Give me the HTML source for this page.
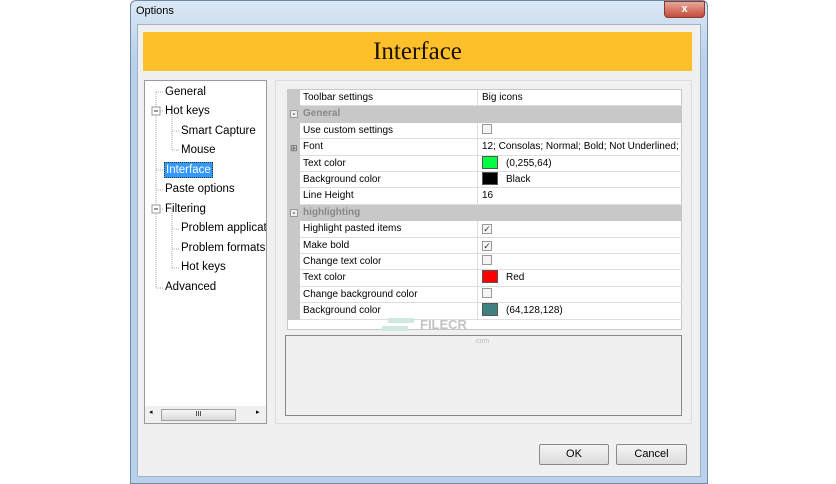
<!DOCTYPE html>
<html><head><style>
*{margin:0;padding:0;box-sizing:border-box}
body{width:836px;height:484px;background:#fff;position:relative;overflow:hidden;font-family:"Liberation Sans",sans-serif;font-size:11px;color:#000}
.a{position:absolute}
.win{left:130px;top:0;width:578px;height:484px;background:linear-gradient(#dbe8f5,#b9d1ea 60px,#b9d1ea);border:1px solid #6f8aa8;border-radius:6px 6px 0 0}
.client{left:137px;top:24px;width:564px;height:453px;background:#f0f0f0;border:1px solid #9fb3c8}
.banner{left:143px;top:32px;width:549px;height:39px;background:#fec02a;font-family:"Liberation Serif",serif;font-size:25px;text-align:center;line-height:39px;color:#1a1000}
.tree{left:144px;top:80px;width:123px;height:344px;background:#fff;border:1px solid #9a9a9a;overflow:hidden}
.ti{position:absolute;font-size:11.5px;white-space:nowrap;line-height:14px}
.grid{left:287px;top:89px;width:395px;height:241px;background:#fff;border:1px solid #c8c8c8}
.row{position:absolute;left:12px;width:382px;height:16.4px;border-bottom:1px solid #ddd;font-size:10px;line-height:16px}
.row .n{position:absolute;left:3px}
.row .v{position:absolute;left:177px;top:0;height:16px;border-left:1px solid #ddd;padding-left:4px;width:205px;white-space:nowrap;overflow:hidden}
.cat{position:absolute;left:0;width:394px;height:16.4px;background:#c8c8c8;color:#888;font-weight:bold;font-size:10px;line-height:16px;padding-left:15px}
.cb{display:inline-block;width:10px;height:10px;border:1px solid #999;background:#f4f4f4;vertical-align:-1px;font-size:9px;line-height:8px;text-align:center;color:#335}
.sw{display:inline-block;width:16px;height:13px;border:1px solid #555;vertical-align:-3px;margin-right:8px}
.btn{top:444px;height:21px;border:1px solid #8a8a8a;border-radius:2px;background:linear-gradient(#f4f4f4,#dcdcdc);text-align:center;line-height:19px;font-size:11px}
</style></head><body>
<div class="a win"></div>
<div class="a" style="left:136px;top:5px;font-size:11px">Options</div>
<div class="a" style="left:664px;top:1px;width:41px;height:17px;background:linear-gradient(#e8a89a,#c44a3a);border:1px solid #8a3a30;border-radius:0 0 4px 4px;color:#fff;font-weight:bold;text-align:center;font-size:11px;line-height:15px">x</div>
<div class="a client"></div>
<div class="a banner">Interface</div>
<div class="a" style="left:275px;top:80px;width:417px;height:344px;border:1px solid #dcdcdc"></div>
<div class="a tree">
<svg class="a" style="left:0;top:0" width="121" height="320"><g stroke="#aaa" stroke-dasharray="1,1" fill="none">
<path d="M11 11V207M11 11H19M11 30H19M11 89H19M11 109H19M11 128H19M11 207H19M27 30V69M27 50H35M27 69H35M27 128V187M27 148H35M27 168H35M27 187H35"/></g>
<rect x="7" y="26" width="8" height="8" fill="#fff" stroke="#999"/><path d="M9 30H13" stroke="#333"/>
<rect x="7" y="124" width="8" height="8" fill="#fff" stroke="#999"/><path d="M9 128H13" stroke="#333"/></svg>
<div class="ti" style="left:20px;top:4px">General</div>
<div class="ti" style="left:20px;top:23px">Hot keys</div>
<div class="ti" style="left:36px;top:43px">Smart Capture</div>
<div class="ti" style="left:36px;top:62px">Mouse</div>
<div class="ti" style="left:19px;top:81px;background:#3399ff;color:#fff;padding:0 1px;border:1px dotted #333">Interface</div>
<div class="ti" style="left:20px;top:101px">Paste options</div>
<div class="ti" style="left:20px;top:121px">Filtering</div>
<div class="ti" style="left:36px;top:140px">Problem applicatio</div>
<div class="ti" style="left:36px;top:160px">Problem formats</div>
<div class="ti" style="left:36px;top:179px">Hot keys</div>
<div class="ti" style="left:20px;top:199px">Advanced</div>
<div class="a" style="left:0;top:325px;width:121px;height:17px;background:#f0f0f0"></div>
<div class="a" style="left:16px;top:328px;width:75px;height:12px;background:linear-gradient(#f6f6f6,#dadada);border:1px solid #a0a0a0;font-size:7px;text-align:center;line-height:10px">III</div>
<div class="a" style="left:4px;top:327px;font-size:7px">◂</div><div class="a" style="left:111px;top:327px;font-size:7px">▸</div>
</div>
<div class="a grid">
<div class="a" style="left:0;top:0;width:12px;height:230px;background:#c8c8c8"></div>
<div class="row" style="top:0"><span class="n">Toolbar settings</span><span class="v">Big icons</span></div>
<div class="cat" style="top:16.4px">General<span class="a" style="left:2px;top:4px;width:8px;height:8px;border:1px solid #999;background:#eee;font-size:8px;line-height:6px;text-align:center;color:#444">-</span></div>
<div class="row" style="top:32.8px"><span class="n">Use custom settings</span><span class="v"><span class="cb"></span></span></div>
<div class="row" style="top:49.2px"><span class="n">Font</span><span class="v">12; Consolas; Normal; Bold; Not Underlined; M</span></div>
<div class="a" style="left:2px;top:53px;font-size:9px;color:#555">⊞</div>
<div class="row" style="top:65.6px"><span class="n">Text color</span><span class="v"><span class="sw" style="background:#00ff40"></span>(0,255,64)</span></div>
<div class="row" style="top:82px"><span class="n">Background color</span><span class="v"><span class="sw" style="background:#000"></span>Black</span></div>
<div class="row" style="top:98.4px"><span class="n">Line Height</span><span class="v">16</span></div>
<div class="cat" style="top:114.8px">highlighting<span class="a" style="left:2px;top:4px;width:8px;height:8px;border:1px solid #999;background:#eee;font-size:8px;line-height:6px;text-align:center;color:#444">-</span></div>
<div class="row" style="top:131.2px"><span class="n">Highlight pasted items</span><span class="v"><span class="cb">✓</span></span></div>
<div class="row" style="top:147.6px"><span class="n">Make bold</span><span class="v"><span class="cb">✓</span></span></div>
<div class="row" style="top:164px"><span class="n">Change text color</span><span class="v"><span class="cb"></span></span></div>
<div class="row" style="top:180.4px"><span class="n">Text color</span><span class="v"><span class="sw" style="background:#f00"></span>Red</span></div>
<div class="row" style="top:196.8px"><span class="n">Change background color</span><span class="v"><span class="cb"></span></span></div>
<div class="row" style="top:213.2px"><span class="n">Background color</span><span class="v"><span class="sw" style="background:#408080"></span>(64,128,128)</span></div>
</div>
<div class="a" style="left:285px;top:335px;width:397px;height:81px;border:1px solid #888;background:#f0f0f0"></div>
<div class="a" style="left:388px;top:318px;width:26px;height:5px;background:#cfe9df"></div>
<div class="a" style="left:382px;top:326px;width:26px;height:5px;background:#cfe9df"></div>
<div class="a" style="left:420px;top:317px;font-size:13px;font-weight:bold;color:#c4c4c4">FILECR</div>
<div class="a" style="left:474px;top:338px;font-size:7px;color:#bbb">.com</div>
<div class="a btn" style="left:539px;width:70px">OK</div>
<div class="a btn" style="left:616px;width:71px">Cancel</div>
</body></html>
